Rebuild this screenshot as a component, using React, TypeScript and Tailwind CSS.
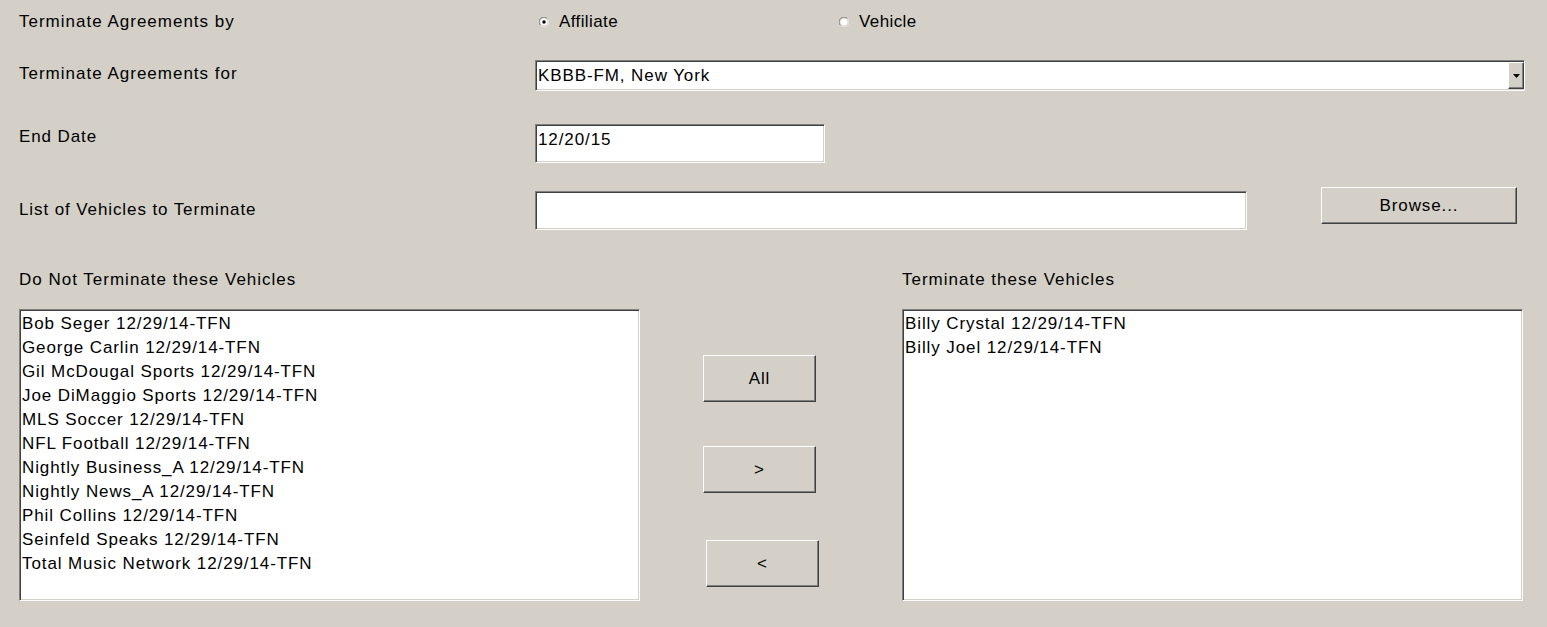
import React from "react";

const sunken =
  "bg-white border border-t-[#808080] border-l-[#808080] border-b-white border-r-white shadow-[inset_1px_1px_0_#404040,inset_-1px_-1px_0_#d4d0c8]";
const raised =
  "bg-[#d4d0c8] border border-t-white border-l-white border-b-[#404040] border-r-[#404040] shadow-[inset_-1px_-1px_0_#808080]";

const leftVehicles = [
  "Bob Seger 12/29/14-TFN",
  "George Carlin 12/29/14-TFN",
  "Gil McDougal Sports 12/29/14-TFN",
  "Joe DiMaggio Sports 12/29/14-TFN",
  "MLS Soccer 12/29/14-TFN",
  "NFL Football 12/29/14-TFN",
  "Nightly Business_A 12/29/14-TFN",
  "Nightly News_A 12/29/14-TFN",
  "Phil Collins 12/29/14-TFN",
  "Seinfeld Speaks 12/29/14-TFN",
  "Total Music Network 12/29/14-TFN",
];

const rightVehicles = ["Billy Crystal 12/29/14-TFN", "Billy Joel 12/29/14-TFN"];

function Radio({ checked, label }: { checked: boolean; label: string }) {
  return (
    <div className="flex items-center">
      <svg width="10" height="10" viewBox="0 0 10 10" className="shrink-0">
        <path d="M1.5 8.5A4.5 4.5 0 0 1 8.5 1.5" fill="none" stroke="#808080" strokeWidth="1" />
        <path d="M8.5 1.5A4.5 4.5 0 0 1 1.5 8.5" fill="none" stroke="#e8e6e0" strokeWidth="1" />
        <circle cx="5" cy="5" r="3.6" fill="#ffffff" />
        {checked && <circle cx="5" cy="5" r="1.7" fill="#000000" />}
      </svg>
      <span className="ml-[10px] leading-[20px] tracking-[0.4px]">{label}</span>
    </div>
  );
}

function VehicleList({ items }: { items: string[] }) {
  return (
    <div className={`${sunken} w-[621px] h-[292px] pt-[2px] pl-[2px] overflow-hidden`}>
      {items.map((v) => (
        <div key={v} className="h-[24px] leading-[24px] whitespace-nowrap">
          {v}
        </div>
      ))}
    </div>
  );
}

export default function App() {
  return (
    <div className="w-[1547px] h-[627px] bg-[#d4d0c8] pl-[19px] overflow-hidden text-black text-[17px] tracking-[0.9px] font-['Liberation_Sans',Arial,sans-serif]">
      {/* terminate by */}
      <div className="flex items-center h-[44px]">
        <div className="w-[516px] leading-[20px] tracking-[1px]">Terminate Agreements by</div>
        <div className="flex pl-[4px]">
          <div className="w-[300px]">
            <Radio checked label="Affiliate" />
          </div>
          <span className="tracking-[1.2px]">
            <Radio checked={false} label="Vehicle" />
          </span>
        </div>
      </div>

      {/* terminate for */}
      <div className="flex items-start mt-[16px]">
        <div className="w-[516px] pt-[4px] leading-[20px] tracking-[1px]">Terminate Agreements for</div>
        <div className={`${sunken} w-[990px] h-[31px] flex items-center`}>
          <div className="flex-1 pl-[2px] leading-[20px]">KBBB-FM, New York</div>
          <div className={`${raised} w-[16px] h-[27px] flex items-center justify-center`}>
            <svg width="7" height="4" viewBox="0 0 7 4">
              <path d="M0 0h7L3.5 4z" fill="#000000" />
            </svg>
          </div>
        </div>
      </div>

      {/* end date */}
      <div className="flex items-start mt-[33px]">
        <div className="w-[516px] pt-[3px] leading-[20px]">End Date</div>
        <div className={`${sunken} w-[290px] h-[39px] pt-[5px] pl-[2px] leading-[20px]`}>12/20/15</div>
      </div>

      {/* list of vehicles */}
      <div className="flex items-start mt-[28px]">
        <div className="w-[516px] pt-[9px] leading-[20px]">List of Vehicles to Terminate</div>
        <div className={`${sunken} w-[712px] h-[39px]`} />
        <button
          className={`${raised} w-[196px] h-[37px] ml-[74px] mt-[-4px] flex items-center justify-center leading-[20px]`}
        >
          Browse...
        </button>
      </div>

      {/* list headers */}
      <div className="flex mt-[40px] leading-[20px] tracking-[1px]">
        <div className="w-[883px]">Do Not Terminate these Vehicles</div>
        <div>Terminate these Vehicles</div>
      </div>

      {/* lists */}
      <div className="flex mt-[19px]">
        <VehicleList items={leftVehicles} />
        <div className="w-[262px] flex flex-col">
          <button className={`${raised} w-[113px] h-[47px] ml-[63px] mt-[46px] flex items-center justify-center`}>
            All
          </button>
          <button className={`${raised} w-[113px] h-[47px] ml-[63px] mt-[44px] flex items-center justify-center`}>
            &gt;
          </button>
          <button className={`${raised} w-[113px] h-[47px] ml-[66px] mt-[47px] flex items-center justify-center`}>
            &lt;
          </button>
        </div>
        <VehicleList items={rightVehicles} />
      </div>
    </div>
  );
}
